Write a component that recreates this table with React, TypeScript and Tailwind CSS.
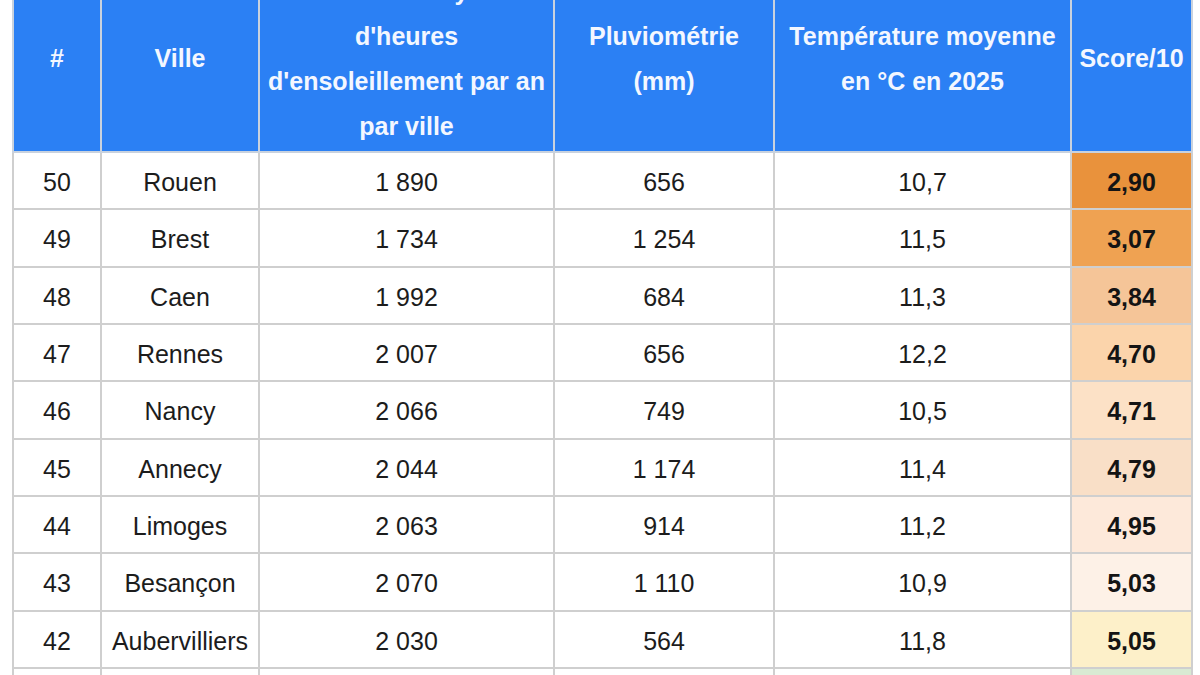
type Row = {
  rank: number;
  city: string;
  sun: string;
  rain: string;
  temp: string;
  score: string;
  bg: string;
};

const rows: Row[] = [
  { rank: 50, city: "Rouen", sun: "1 890", rain: "656", temp: "10,7", score: "2,90", bg: "bg-[#e9923c]" },
  { rank: 49, city: "Brest", sun: "1 734", rain: "1 254", temp: "11,5", score: "3,07", bg: "bg-[#efa252]" },
  { rank: 48, city: "Caen", sun: "1 992", rain: "684", temp: "11,3", score: "3,84", bg: "bg-[#f5c598]" },
  { rank: 47, city: "Rennes", sun: "2 007", rain: "656", temp: "12,2", score: "4,70", bg: "bg-[#fbd4ab]" },
  { rank: 46, city: "Nancy", sun: "2 066", rain: "749", temp: "10,5", score: "4,71", bg: "bg-[#fce1c6]" },
  { rank: 45, city: "Annecy", sun: "2 044", rain: "1 174", temp: "11,4", score: "4,79", bg: "bg-[#f9dfc7]" },
  { rank: 44, city: "Limoges", sun: "2 063", rain: "914", temp: "11,2", score: "4,95", bg: "bg-[#fde9da]" },
  { rank: 43, city: "Besançon", sun: "2 070", rain: "1 110", temp: "10,9", score: "5,03", bg: "bg-[#fdf1e7]" },
  { rank: 42, city: "Aubervilliers", sun: "2 030", rain: "564", temp: "11,8", score: "5,05", bg: "bg-[#fdf0c9]" },
];

const th = "border-2 border-[#c9d2de] px-1 text-center align-middle font-bold";
const td = "border-2 border-[#cfcfcf] pt-[4px] text-center align-middle";

export default function App() {
  return (
    <div className="h-[675px] w-[1200px] overflow-hidden bg-white font-['Liberation_Sans',Arial,sans-serif]">
      <table className="-mt-[36px] ml-[12px] w-[1179px] table-fixed border-collapse text-[25px]">
        <colgroup>
          <col className="w-[88px]" />
          <col className="w-[158px]" />
          <col className="w-[295px]" />
          <col className="w-[220px]" />
          <col className="w-[297px]" />
          <col className="w-[121px]" />
        </colgroup>
        <thead>
          <tr className="h-[187px] bg-[#2b80f4] leading-[45px] text-[#f3f7ff]">
            <th className={th}>#</th>
            <th className={th}>Ville</th>
            <th className={th}>
              Nombre moyen
              <br />
              d'heures
              <br />
              d'ensoleillement par an
              <br />
              par ville
            </th>
            <th className={th}>
              Pluviométrie
              <br />
              (mm)
            </th>
            <th className={th}>
              Température moyenne
              <br />
              en °C en 2025
            </th>
            <th className={th}>Score/10</th>
          </tr>
        </thead>
        <tbody className="text-[#1c1c1c]">
          {rows.map((r) => (
            <tr key={r.rank} className="h-[57.33px]">
              <td className={td}>{r.rank}</td>
              <td className={td}>{r.city}</td>
              <td className={td}>{r.sun}</td>
              <td className={td}>{r.rain}</td>
              <td className={td}>{r.temp}</td>
              <td className={`${td} ${r.bg} font-bold text-[#141414]`}>{r.score}</td>
            </tr>
          ))}
          <tr className="h-[57.33px]">
            <td className={td}></td>
            <td className={td}></td>
            <td className={td}></td>
            <td className={td}></td>
            <td className={td}></td>
            <td className={`${td} bg-[#d9ead3]`}></td>
          </tr>
        </tbody>
      </table>
    </div>
  );
}
